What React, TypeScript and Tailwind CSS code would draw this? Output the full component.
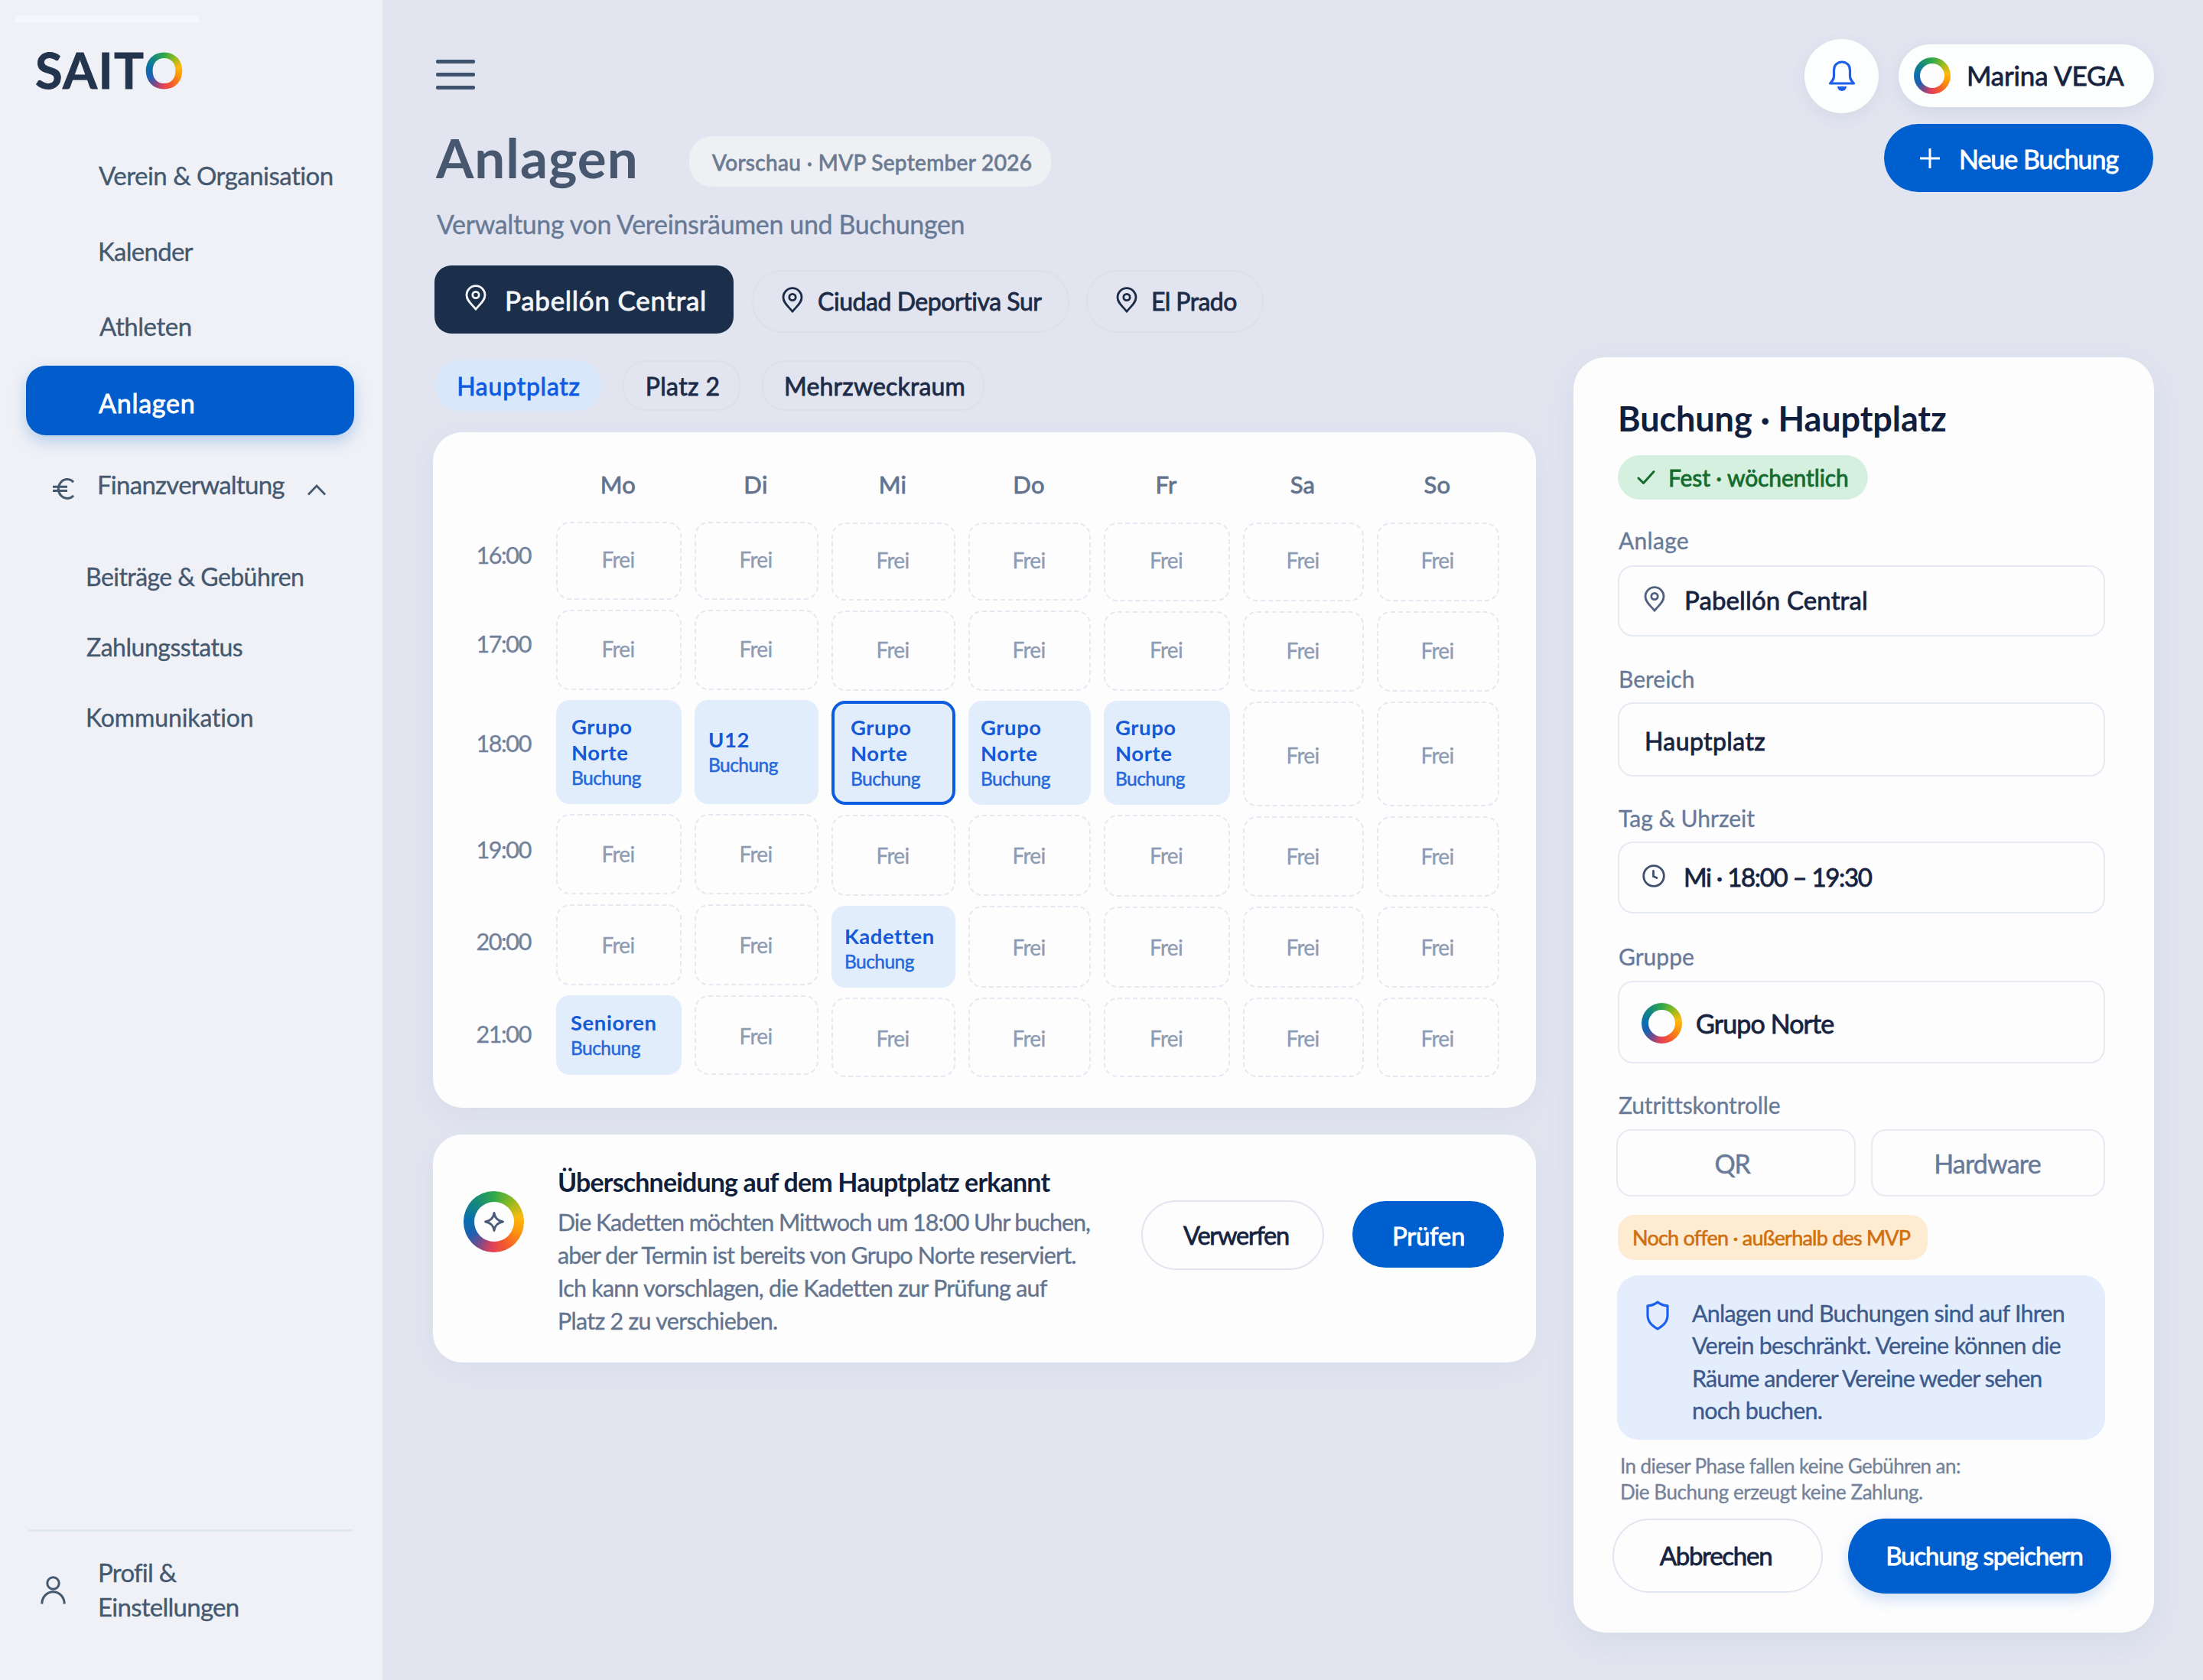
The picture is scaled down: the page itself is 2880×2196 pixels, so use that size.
import { useState } from "react";
import clsx from "clsx";

type Cell = {
  title: string[];
  pad: string;
  selected?: boolean;
};

type Day = {
  name: string;
  rows: string;
  bookings: Record<number, Cell>;
};

const hours = [
  { label: "16:00", pad: "pb-[14px]", free: "pb-[5px]" },
  { label: "17:00", pad: "pb-[14px]", free: "pb-[4px]" },
  { label: "18:00", pad: "pb-[20px]", free: "pt-[2px]" },
  { label: "19:00", pad: "pb-[10px]", free: "pb-[1px]" },
  { label: "20:00", pad: "pb-[6px]", free: "pt-0" },
  { label: "21:00", pad: "pb-[1px]", free: "pt-[2px]" },
];

// Row tracks get a touch taller towards the weekend columns
const rowsEarly = "mt-[26px] grid-rows-[102px_105px_136px_105px_106px_104px]";
const rowsMid = "mt-[27px] grid-rows-[102px_105px_136px_106px_107px_104px]";
const rowsFriday = "mt-[27px] grid-rows-[103px_104px_136px_107px_106px_104px]";
const rowsLate = "mt-[27px] grid-rows-[103px_105px_137px_105px_106px_104px]";

const days: Day[] = [
  {
    name: "Mo",
    rows: rowsEarly,
    bookings: {
      2: { title: ["Grupo", "Norte"], pad: "pl-[20px]" },
      5: { title: ["Senioren"], pad: "pl-[19px]" },
    },
  },
  {
    name: "Di",
    rows: rowsEarly,
    bookings: { 2: { title: ["U12"], pad: "pl-[18px]" } },
  },
  {
    name: "Mi",
    rows: rowsMid,
    bookings: {
      2: { title: ["Grupo", "Norte"], pad: "pl-[21px]", selected: true },
      4: { title: ["Kadetten"], pad: "pl-[17px] pt-[5px]" },
    },
  },
  {
    name: "Do",
    rows: rowsMid,
    bookings: { 2: { title: ["Grupo", "Norte"], pad: "pl-[16px]" } },
  },
  {
    name: "Fr",
    rows: rowsFriday,
    bookings: { 2: { title: ["Grupo", "Norte"], pad: "pl-[15px]" } },
  },
  { name: "Sa", rows: rowsLate, bookings: {} },
  { name: "So", rows: rowsLate, bookings: {} },
];

const medium = "[-webkit-text-stroke:0.8px_currentColor]";
const soft = "[-webkit-text-stroke:0.35px_currentColor]";

/* ---------- Icons ---------- */

function Pin({ className }: { className?: string }) {
  return (
    <svg
      viewBox="0 0 28 34"
      fill="none"
      stroke="currentColor"
      strokeWidth="2.8"
      strokeLinejoin="round"
      className={clsx("h-[34px] w-[28px] shrink-0", className)}
    >
      <path d="M14 32.3C9.5 26 2 21.5 2 13.7a12 12 0 0 1 24 0C26 21.5 18.5 26 14 32.3z" />
      <circle cx="14" cy="13.5" r="4.2" />
    </svg>
  );
}

function Bell() {
  return (
    <svg viewBox="0 0 36 40" className="h-[40px] w-[36px]">
      <path
        d="M18 2C11 2 7.5 7 7.5 13v7.5c0 4-1.8 6-5 9.5h31c-3.2-3.5-5-5.5-5-9.5V13C28.5 7 25 2 18 2z"
        fill="none"
        stroke="currentColor"
        strokeWidth="3.2"
        strokeLinejoin="round"
      />
      <path d="M12 34h12a6 6 0 0 1-12 0z" fill="currentColor" />
    </svg>
  );
}

function Euro() {
  return (
    <svg
      viewBox="0 0 28 28"
      fill="none"
      stroke="currentColor"
      strokeWidth="3"
      className="h-[28px] w-[28px]"
    >
      <path d="M27 5.2A11.5 12.5 0 1 0 27 22.8" />
      <path d="M0 11.3h19M0 16.5h19" />
    </svg>
  );
}

function Chevron() {
  return (
    <svg
      viewBox="0 0 26 16"
      fill="none"
      stroke="currentColor"
      strokeWidth="2.8"
      className="h-[16px] w-[26px]"
    >
      <path d="M2 14.5 13 3l11 11.5" />
    </svg>
  );
}

function Person() {
  return (
    <svg
      viewBox="0 0 33 37"
      fill="none"
      stroke="currentColor"
      strokeWidth="3"
      className="h-[37px] w-[33px]"
    >
      <circle cx="16.5" cy="9.5" r="7.7" />
      <path d="M1.8 36.5C2 27 8.5 20.8 16.5 20.8S31 27 31.2 36.5" />
    </svg>
  );
}

function Check() {
  return (
    <svg
      viewBox="0 0 24 20"
      fill="none"
      stroke="currentColor"
      strokeWidth="3"
      strokeLinecap="round"
      strokeLinejoin="round"
      className="h-[20px] w-[24px]"
    >
      <path d="M2 11l6.5 6.5L22 2.5" />
    </svg>
  );
}

function Clock() {
  return (
    <svg
      viewBox="0 0 30 30"
      fill="none"
      stroke="currentColor"
      strokeWidth="2.8"
      strokeLinecap="round"
      className="h-[30px] w-[30px]"
    >
      <circle cx="15" cy="15" r="13.3" />
      <path d="M14.5 8.5v7l4.5 2" />
    </svg>
  );
}

function Shield() {
  return (
    <svg
      viewBox="0 0 30 39"
      fill="none"
      stroke="currentColor"
      strokeWidth="3.2"
      strokeLinejoin="round"
      className="h-[39px] w-[30px] shrink-0"
    >
      <path d="M15 2C11.5 5 7 6.5 2 6.8V19c0 9 5.500 13.500 13 18.200C22.500 32.500 28 28 28 19V6.800C23 6.500 18.500 5 15 2z" />
    </svg>
  );
}

function Sparkle() {
  return (
    <svg
      viewBox="0 0 28 28"
      fill="none"
      stroke="currentColor"
      strokeWidth="2.8"
      strokeLinejoin="round"
      className="h-[28px] w-[28px]"
    >
      <path d="M14 2.5C15 9.5 18.5 13 25.5 14 18.5 15 15 18.5 14 25.5 13 18.5 9.5 15 2.5 14 9.5 13 13 9.5 14 2.5z" />
    </svg>
  );
}

const rainbow =
  "bg-[conic-gradient(from_0deg,#2fa84a_0deg,#8cba22_40deg,#fdb90f_80deg,#fb9a0a_110deg,#f4572f_155deg,#e0405a_185deg,#7d4a86_212deg,#1f5fb0_240deg,#0a6fae_275deg,#15877f_315deg,#2fa84a_360deg)]";

function Ring({
  size,
  inner,
  children,
}: {
  size: string;
  inner: string;
  children?: React.ReactNode;
}) {
  return (
    <span
      className={clsx(
        "flex shrink-0 items-center justify-center rounded-full",
        rainbow,
        size
      )}
    >
      <span
        className={clsx(
          "flex items-center justify-center rounded-full bg-[#fdfdfe]",
          inner
        )}
      >
        {children}
      </span>
    </span>
  );
}

/* ---------- Sidebar ---------- */

function Sidebar() {
  const [open, setOpen] = useState(true);

  return (
    <aside
      className={clsx(
        "flex h-full w-[500px] shrink-0 flex-col bg-[#eff1f6] text-[33px] text-[#44586f]",
        soft
      )}
    >
      <div className="ml-[20px] mt-[20px] h-[10px] w-[240px] bg-[#f5f7fc]" />

      <div className="ml-[46px] mt-[21px] flex h-[80px] items-center text-[65px] font-bold leading-[80px] text-[#23344f] [-webkit-text-stroke:0.8px_currentColor]">
        <span className="tracking-[0.02em]">SAIT</span>
        <span
          className={clsx(
            "-ml-[1px] bg-clip-text text-transparent [-webkit-text-stroke:0px]",
            rainbow
          )}
        >
          O
        </span>
      </div>

      <nav className="mt-[49px] flex flex-col">
        <a className="flex h-[99px] items-center pl-[129px] tracking-[-0.016em]">
          Verein &amp; Organisation
        </a>
        <a className="flex h-[99px] items-center pl-[128px] tracking-[-0.022em]">
          Kalender
        </a>
        <a className="flex h-[100px] items-center pb-[2px] pl-[130px] tracking-[-0.014em]">
          Athleten
        </a>
        <a
          className={clsx(
            "ml-[34px] flex h-[91px] w-[429px] items-center rounded-[26px] bg-[#005dcb] pl-[95px] pt-[5px] text-[34px] tracking-[0.022em] text-white shadow-[0_8px_20px_rgba(0,93,203,0.24)]",
            medium
          )}
        >
          Anlagen
        </a>

        <button
          onClick={() => setOpen(!open)}
          className="flex h-[128px] items-center pl-[69px]"
        >
          <span className="mt-[11px]">
            <Euro />
          </span>
          <span className="ml-[30px] mt-[2px] w-[274px] text-left tracking-[-0.022em]">
            Finanzverwaltung
          </span>
          <span className="mt-[14px]">
            <Chevron />
          </span>
        </button>

        {open && (
          <div className="mt-[11px] flex flex-col text-[32px]">
            <a className="flex h-[92px] items-center pl-[112px] tracking-[-0.017em]">
              Beiträge &amp; Gebühren
            </a>
            <a className="flex h-[92px] items-center pl-[113px] tracking-[-0.015em]">
              Zahlungsstatus
            </a>
            <a className="flex h-[91px] items-center pl-[112px] tracking-[-0.004em]">
              Kommunikation
            </a>
          </div>
        )}
      </nav>

      <div className="mt-auto ml-[37px] h-[3px] w-[424px] bg-[#e2e8ef]" />
      <div className="mb-[73px] mt-[31px] flex items-center pl-[53px]">
        <Person />
        <span className="ml-[42px] leading-[45px] tracking-[-0.022em]">
          Profil &amp;
          <br />
          Einstellungen
        </span>
      </div>
    </aside>
  );
}

/* ---------- Header ---------- */

function TopBar() {
  return (
    <div className="mt-[50px] flex h-[98px] items-center">
      <button className="-mt-[3px] ml-[4px] flex flex-col gap-[12px]">
        <span className="h-[5px] w-[51px] rounded-[2px] bg-[#40536f]" />
        <span className="h-[5px] w-[51px] rounded-[2px] bg-[#40536f]" />
        <span className="h-[5px] w-[51px] rounded-[2px] bg-[#40536f]" />
      </button>

      <button className="ml-auto flex h-[97px] w-[97px] items-center justify-center rounded-full bg-[#fdfefe] text-[#1f5fe8] shadow-[0_6px_20px_rgba(70,85,130,0.08)]">
        <Bell />
      </button>

      <button className="ml-[26px] flex h-[82px] w-[334px] items-center rounded-full bg-[#fdfefe] pl-[20px] shadow-[0_6px_20px_rgba(70,85,130,0.1)]">
        <Ring size="h-[48px] w-[48px]" inner="h-[32px] w-[32px]" />
        <span
          className={clsx(
            "-mt-[1px] ml-[21px] text-[35px] tracking-[-0.005em] text-[#16233f]",
            medium
          )}
        >
          Marina VEGA
        </span>
      </button>
    </div>
  );
}

function TitleRow() {
  return (
    <>
      <div className="mt-[14px] flex h-[89px] items-center">
        <h1 className="-mt-[2px] ml-[4px] w-[331px] text-[71px] font-bold leading-[89px] tracking-[0.014em] text-[#47576f]">
          Anlagen
        </h1>
        <span
          className={clsx(
            "mt-[9px] flex h-[66px] w-[473px] items-center rounded-[30px] bg-[#eef0f4] pl-[30px] pt-[1px] text-[28px] tracking-[0.012em] text-[#6b7b92]",
            medium
          )}
        >
          Vorschau · MVP September 2026
        </span>
        <button
          className={clsx(
            "ml-auto mr-[1px] flex h-[89px] w-[352px] items-center rounded-full bg-[#005fcf] pl-[47px] pt-[1px] text-[34px] text-white",
            medium
          )}
        >
          <svg viewBox="0 0 26 26" stroke="currentColor" strokeWidth="3" className="h-[26px] w-[26px]">
            <path d="M13 0v26M0 13h26" />
          </svg>
          <span className="ml-[25px] tracking-[-0.03em]">Neue Buchung</span>
        </button>
      </div>
      <p
        className={clsx(
          "ml-[5px] mt-[20px] h-[44px] text-[34px] leading-[44px] tracking-[-0.011em] text-[#677994]",
          soft
        )}
      >
        Verwaltung von Vereinsräumen und Buchungen
      </p>
    </>
  );
}

function VenueTabs() {
  return (
    <div className={clsx("mt-[32px] flex h-[89px] items-center text-[#1c2b47]", medium)}>
      <button className="ml-[2px] flex h-[89px] w-[391px] items-center rounded-[22px] bg-[#1b2f4a] pl-[40px] text-[35px] text-[#f4f6fa]">
        <Pin className="-mt-[6px]" />
        <span className="ml-[24px] mt-[2px] tracking-[0.021em]">Pabellón Central</span>
      </button>
      <button className="ml-[24px] mt-[5px] flex h-[82px] w-[415px] items-center rounded-[40px] border-2 border-[#dde0ea] pl-[37px] text-[32px]">
        <Pin className="-mt-[4px]" />
        <span className="ml-[19px] tracking-[-0.014em]">Ciudad Deportiva Sur</span>
      </button>
      <button className="ml-[22px] mt-[5px] flex h-[82px] w-[232px] items-center rounded-[40px] border-2 border-[#dde0ea] pl-[37px] text-[32px]">
        <Pin className="-mt-[4px]" />
        <span className="ml-[18px] tracking-[-0.018em]">El Prado</span>
      </button>
    </div>
  );
}

function AreaTabs() {
  const [active, setActive] = useState("Hauptplatz");
  const areas = [
    { name: "Hauptplatz", width: "w-[216px] tracking-[0.024em]" },
    { name: "Platz 2", width: "w-[154px] pl-[3px] tracking-[0.012em]" },
    { name: "Mehrzweckraum", width: "w-[291px] pl-[4px] tracking-[0.005em]" },
  ];

  return (
    <div className={clsx("ml-[4px] mt-[4px] flex h-[66px] gap-[28px] text-[32px]", medium)}>
      {areas.map((area) => (
        <button
          key={area.name}
          onClick={() => setActive(area.name)}
          className={clsx(
            "flex items-center justify-center rounded-[30px] border-2 pt-[2px]",
            area.width,
            active === area.name
              ? "border-[#d9e7fb] bg-[#d9e7fb] text-[#0b5be2]"
              : "border-[#dde0ea] text-[#1c2b47]"
          )}
        >
          {area.name}
        </button>
      ))}
    </div>
  );
}

/* ---------- Calendar ---------- */

function Slot({ booking, free }: { booking?: Cell; free: string }) {
  if (!booking) {
    return (
      <div
        className={clsx(
          "flex items-center justify-center rounded-[18px] border-2 border-dashed border-[#e6e9f2] pr-[2px] text-[28px] tracking-[-0.025em] text-[#8d9bb3]",
          soft,
          free
        )}
      >
        Frei
      </div>
    );
  }

  return (
    <div
      className={clsx(
        "flex flex-col justify-center rounded-[18px] bg-[#e2edfb]",
        booking.pad,
        booking.selected && "border-4 border-[#0c5ce0]"
      )}
    >
      {booking.title.map((line) => (
        <span
          key={line}
          className="h-[34px] text-[27.5px] font-bold leading-[34px] tracking-[0.02em] text-[#1459d6]"
        >
          {line}
        </span>
      ))}
      <span className="h-[32px] text-[24.5px] leading-[32px] tracking-[-0.022em] text-[#2468dc] [-webkit-text-stroke:0.5px_currentColor]">
        Buchung
      </span>
    </div>
  );
}

function Calendar() {
  return (
    <section className="mt-[28px] flex h-[883px] rounded-[38px] bg-[#fdfdfe] pt-[44px] shadow-[0_10px_36px_rgba(80,95,140,0.07)]">
      <div className="w-[162px] pr-[34px] pt-[47px]">
        <div className="mt-[26px] grid grid-rows-[102px_104px_136px_105px_106px_104px] gap-y-[13px]">
          {hours.map((hour) => (
            <span
              key={hour.label}
              className={clsx(
                "flex items-center justify-end text-[30.5px] tracking-[-0.045em] text-[#71819b]",
                soft,
                hour.pad
              )}
            >
              {hour.label}
            </span>
          ))}
        </div>
      </div>

      <div className="-ml-[1px] grid grid-cols-[164px_162px_162px_160px_165px_158px_160px] gap-x-[17px]">
        {days.map((day) => (
          <div key={day.name}>
            <div
              className={clsx(
                "h-[47px] pr-[2px] pt-[1px] text-center text-[31px] leading-[47px] tracking-[0.01em] text-[#62738e]",
                medium
              )}
            >
              {day.name}
            </div>
            <div className={clsx("grid gap-y-[13px]", day.rows)}>
              {hours.map((hour, i) => (
                <Slot key={hour.label} booking={day.bookings[i]} free={hour.free} />
              ))}
            </div>
          </div>
        ))}
      </div>
    </section>
  );
}

function ConflictCard() {
  return (
    <section className="mt-[35px] flex h-[298px] items-start rounded-[38px] bg-[#fdfdfe] pl-[40px] shadow-[0_10px_36px_rgba(80,95,140,0.05)]">
      <div className="mt-[74px]">
        <Ring size="h-[80px] w-[79px]" inner="h-[52px] w-[52px]">
          <span className="text-[#4a5b78]">
            <Sparkle />
          </span>
        </Ring>
      </div>

      <div className="ml-[44px] w-[763px] whitespace-nowrap pt-[39px]">
        <h2 className="h-[46px] text-[34px] font-bold leading-[46px] tracking-[-0.025em] text-[#101f3c]">
          Überschneidung auf dem Hauptplatz erkannt
        </h2>
        <p
          className={clsx(
            "mt-[8px] text-[30.5px] leading-[43px] tracking-[-0.034em] text-[#63748f]",
            soft
          )}
        >
          Die Kadetten möchten Mittwoch um 18:00 Uhr buchen,
          <br />
          <span className="tracking-[-0.028em]">
            aber der Termin ist bereits von Grupo Norte reserviert.
          </span>
          <br />
          <span className="tracking-[-0.026em]">
            Ich kann vorschlagen, die Kadetten zur Prüfung auf
          </span>
          <br />
          <span className="tracking-[-0.024em]">Platz 2 zu verschieben.</span>
        </p>
      </div>

      <button
        className={clsx(
          "mt-[86px] flex h-[91px] w-[239px] items-center justify-center rounded-full border-2 border-[#e1e6f0] pl-[9px] pt-[2px] text-[32.5px] tracking-[-0.038em] text-[#16233f]",
          medium
        )}
      >
        Verwerfen
      </button>
      <button
        className={clsx(
          "ml-[37px] mt-[87px] flex h-[87px] w-[198px] items-center justify-center rounded-full bg-[#005fcf] pl-[1px] pt-[4px] text-[33px] tracking-[-0.008em] text-white",
          medium
        )}
      >
        Prüfen
      </button>
    </section>
  );
}

/* ---------- Booking panel ---------- */

const label =
  "-mt-[1px] ml-[1px] block h-[41px] text-[30px] leading-[40px] text-[#687a98] [-webkit-text-stroke:0.35px_currentColor]";
const field =
  "flex items-center rounded-[20px] border-2 border-[#e6eaf3] text-[#16233f] [-webkit-text-stroke:0.8px_currentColor]";

function BookingPanel() {
  return (
    <section className="ml-[49px] h-[1667px] w-[759px] rounded-[42px] bg-[#fdfdfe] pl-[58px] pr-[64px] pt-[50px] shadow-[0_12px_40px_rgba(80,95,140,0.09)]">
      <h2 className="h-[60px] text-[45px] font-bold leading-[60px] tracking-[-0.002em] text-[#0f1f3d]">
        Buchung · Hauptplatz
      </h2>

      <div
        className={clsx(
          "mb-[34px] mt-[18px] flex h-[58px] w-[327px] items-center rounded-full bg-[#d6f0df] pl-[25px] text-[30px] text-[#136b2d]",
          medium
        )}
      >
        <Check />
        <span className="ml-[17px] tracking-[-0.004em]">Fest · wöchentlich</span>
      </div>

      <label className={clsx(label, "tracking-[0.01em]")}>Anlage</label>
      <div className={clsx(field, "mb-[36px] mt-[12px] h-[93px] pl-[32px] text-[33px] tracking-[0.004em]")}>
        <Pin className="-mt-[5px] text-[#50617e]" />
        <span className="-mt-[1px] ml-[25px]">Pabellón Central</span>
      </div>

      <label className={label}>Bereich</label>
      <div className={clsx(field, "mb-[35px] mt-[10px] h-[97px] pl-[33px] pt-[4px] text-[32px] tracking-[0.013em]")}>
        Hauptplatz
      </div>

      <label className={label}>Tag &amp; Uhrzeit</label>
      <div className={clsx(field, "mb-[37px] mt-[10px] h-[94px] pl-[30px] text-[33px] tracking-[-0.04em]")}>
        <span className="-mt-[5px] text-[#40516e]">
          <Clock />
        </span>
        <span className="-mt-[1px] ml-[24px]">Mi · 18:00 – 19:30</span>
      </div>

      <label className={label}>Gruppe</label>
      <div className={clsx(field, "mb-[35px] mt-[11px] h-[108px] pl-[29px] pt-[3px] text-[34px] tracking-[-0.026em]")}>
        <Ring size="h-[53px] w-[53px]" inner="h-[35px] w-[35px]" />
        <span className="ml-[18px]">Grupo Norte</span>
      </div>

      <label className={clsx(label, "tracking-[-0.004em]")}>Zutrittskontrolle</label>
      <div className="-ml-[2px] mt-[11px] flex gap-[20px] text-[34px] text-[#687a98] [-webkit-text-stroke:0.5px_currentColor]">
        <button className="flex h-[88px] w-[313px] items-center justify-center rounded-[20px] border-2 border-[#e6eaf3] pr-[10px]">
          <span className="tracking-[-0.04em]">QR</span>
        </button>
        <button className="flex h-[88px] w-[306px] items-center justify-center rounded-[20px] border-2 border-[#e6eaf3] pr-[2px] tracking-[-0.024em]">
          Hardware
        </button>
      </div>

      <div className="mt-[24px] flex h-[59px] w-[405px] items-center whitespace-nowrap rounded-[22px] bg-[#fdecd2] pl-[19px] pt-[1px] text-[27px] tracking-[-0.029em] text-[#cf6f0e] [-webkit-text-stroke:0.6px_currentColor]">
        Noch offen · außerhalb des MVP
      </div>

      <div className="-ml-[1px] mt-[20px] flex h-[215px] w-[638px] rounded-[28px] bg-[#e3edfb] pl-[38px] pt-[28px]">
        <span className="mt-[5px] text-[#1d5ff0]">
          <Shield />
        </span>
        <p
          className={clsx(
            "ml-[30px] whitespace-nowrap text-[30.5px] leading-[42.3px] tracking-[-0.026em] text-[#3c5a8c]",
            soft
          )}
        >
          Anlagen und Buchungen sind auf Ihren
          <br />
          Verein beschränkt. Vereine können die
          <br />
          <span className="tracking-[-0.031em]">Räume anderer Vereine weder sehen</span>
          <br />
          noch buchen.
        </p>
      </div>

      <p
        className={clsx(
          "ml-[3px] mt-[17px] text-[26px] leading-[34px] tracking-[-0.022em] text-[#74839b]",
          soft
        )}
      >
        In dieser Phase fallen keine Gebühren an:
        <br />
        <span className="tracking-[-0.017em]">Die Buchung erzeugt keine Zahlung.</span>
      </p>

      <div className={clsx("-ml-[7px] mt-[18px] flex w-[660px] text-[33px]", medium)}>
        <button className="flex h-[97px] w-[275px] items-center justify-center rounded-full border-2 border-[#e1e6f0] pr-[5px] tracking-[-0.038em] text-[#16233f]">
          Abbrechen
        </button>
        <button className="ml-[33px] flex h-[98px] w-[344px] items-center justify-center rounded-full bg-[#005fcf] pl-[12px] tracking-[-0.033em] text-white shadow-[0_8px_18px_rgba(0,93,203,0.18)]">
          Buchung speichern
        </button>
      </div>
    </section>
  );
}

export default function App() {
  return (
    <div className="flex h-[2196px] w-[2880px] overflow-hidden bg-[#e2e5f0] font-['Lato','Liberation_Sans',sans-serif]">
      <Sidebar />
      <main className="flex min-w-0 flex-1 flex-col pl-[66px] pr-[64px]">
        <TopBar />
        <TitleRow />
        <VenueTabs />
        <div className="mt-[31px] flex items-start">
          <div className="w-[1442px]">
            <AreaTabs />
            <Calendar />
            <ConflictCard />
          </div>
          <BookingPanel />
        </div>
      </main>
    </div>
  );
}
